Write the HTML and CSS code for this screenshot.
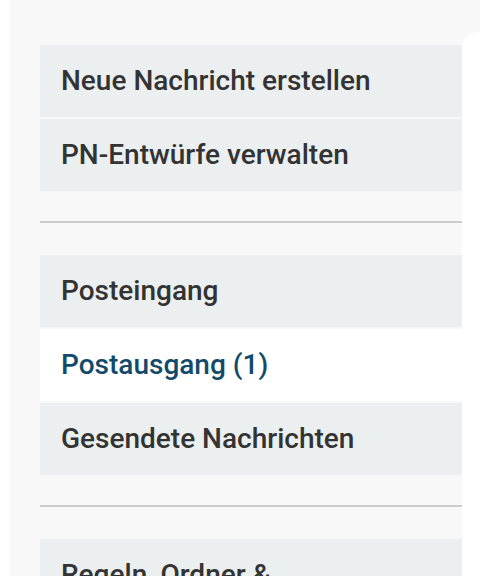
FILE: index.html
```html
<!DOCTYPE html>
<html lang="de">
<head>
<meta charset="utf-8">
<link rel="stylesheet" href="styles.css">
</head>
<body>
<div class="page">
  <nav class="sidebar">
    <ul class="group">
      <li class="item">Neue Nachricht erstellen</li>
      <li class="item">PN-Entwürfe verwalten</li>
    </ul>
    <hr class="sep">
    <ul class="group">
      <li class="item">Posteingang</li>
      <li class="item active">Postausgang (1)</li>
      <li class="item">Gesendete Nachrichten</li>
    </ul>
    <hr class="sep">
    <ul class="group">
      <li class="item">Regeln, Ordner &amp; Benachrichtigungen</li>
    </ul>
  </nav>
  <main class="main"></main>
</div>
</body>
</html>
```
FILE: styles.css
```css
html, body {
  margin: 0;
  padding: 0;
  background: #ffffff;
}
body {
  font-family: Roboto, "Liberation Sans", sans-serif;
  height: 576px;
  overflow: hidden;
}
.page {
  margin-left: 10px;
  background: #f8f8f8;
  display: flex;
  min-height: 576px;
}
.sidebar {
  width: 422px;
  padding: 45px 0 0 30px;
  flex: none;
}
.group {
  list-style: none;
  margin: 0;
  padding: 0;
  display: flex;
  flex-direction: column;
  gap: 2px;
}
.item {
  background: #ebeff0;
  color: #333333;
  font-size: 28px;
  font-weight: 500;
  line-height: 32px;
  padding: 20px 20px 20px 21px;
}
.item.active {
  background: #ffffff;
  color: #124b6a;
}
.sep {
  border: 0;
  height: 2px;
  background: #cccccc;
  margin: 30px 0 32px;
}
.main {
  flex: 1;
  margin-top: 32px;
  background: #ffffff;
  border-top-left-radius: 16px;
}
```
